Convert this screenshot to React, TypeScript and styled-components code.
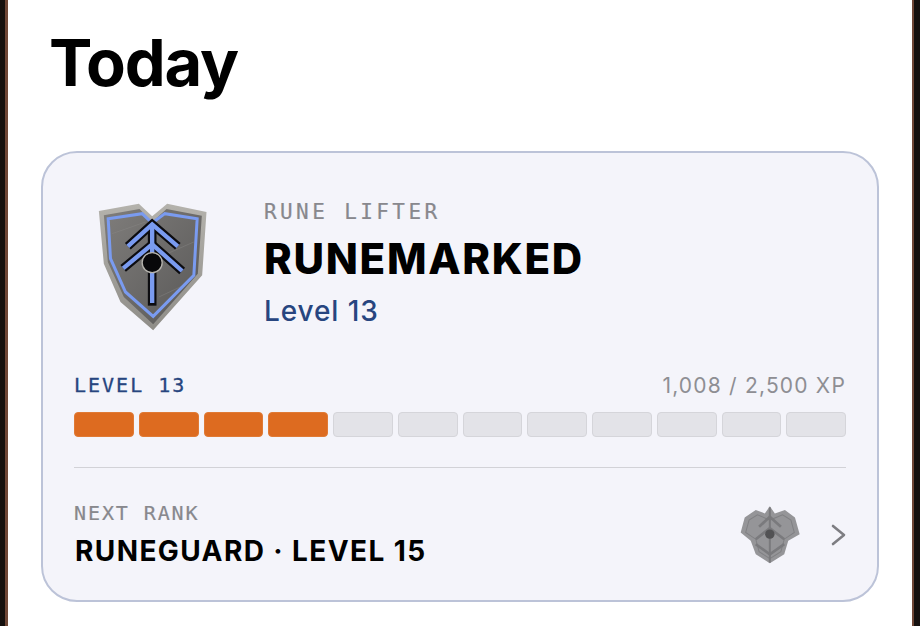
import React from 'react';
import styled, { createGlobalStyle } from 'styled-components';

const GlobalStyle = createGlobalStyle`
  html, body {
    margin: 0;
    padding: 0;
    background: #fff;
    overflow: hidden;
  }
  * {
    box-sizing: border-box;
  }
`;

const Frame = styled.div`
  width: 920px;
  height: 626px;
  overflow: hidden;
  background: #15100e;
  padding: 0 6px 0 5px;
`;

const Screen = styled.div`
  height: 626px;
  background: #fff;
  border-left: 3px solid #6e4636;
  border-right: 2px solid #6e4636;
  padding: 24px 33px 0 33px;
`;

const Title = styled.h1`
  margin: 0 0 0 8px;
  font-family: Inter, "Liberation Sans", sans-serif;
  font-weight: 700;
  font-size: 65px;
  line-height: 77px;
  letter-spacing: -1.2px;
  color: #000;
`;

const Card = styled.section`
  margin-top: 50px;
  height: 451px;
  background: #f4f4fa;
  border: 2px solid #bcc3d8;
  border-radius: 36px;
  padding: 49px 31px 0 31px;
`;

const RankRow = styled.div`
  display: flex;
  align-items: flex-start;
  padding-left: 23px;
  height: 172px;
`;

const RankText = styled.div`
  margin-left: 55px;
  display: flex;
  flex-direction: column;
`;

const Eyebrow = styled.div`
  font-family: "DejaVu Sans Mono", "Liberation Mono", monospace;
  font-size: 21px;
  line-height: 20px;
  letter-spacing: 3.4px;
  color: #88888d;
  -webkit-text-stroke: 0.2px #88888d;
`;

const RankName = styled.div`
  margin-top: 11px;
  font-family: Inter, "Liberation Sans", sans-serif;
  font-weight: 800;
  font-size: 42px;
  line-height: 52px;
  letter-spacing: 1.7px;
  color: #000;
`;

const RankLevel = styled.div`
  margin-top: 9px;
  font-family: Inter, "Liberation Sans", sans-serif;
  font-weight: 500;
  font-size: 28px;
  line-height: 34px;
  letter-spacing: 0.9px;
  color: #27457f;
`;

const ProgressHead = styled.div`
  display: flex;
  align-items: center;
  justify-content: space-between;
  height: 22px;
`;

const LevelLabel = styled.div`
  font-family: "DejaVu Sans Mono", "Liberation Mono", monospace;
  font-size: 20px;
  letter-spacing: 2px;
  color: #27457f;
  -webkit-text-stroke: 0.3px #27457f;
`;

const XpLabel = styled.div`
  font-family: Inter, "Liberation Sans", sans-serif;
  font-size: 21px;
  letter-spacing: 1.2px;
  color: #8e8e93;
`;

const Segments = styled.div`
  margin-top: 16px;
  display: grid;
  grid-template-columns: repeat(12, 1fr);
  gap: 5px;
`;

const Segment = styled.div<{ $on: boolean }>`
  height: 25px;
  border-radius: 4px;
  background: ${(p) => (p.$on ? '#dd6b20' : '#e3e3e8')};
  border: 1px solid ${(p) => (p.$on ? '#e07a35' : '#d5d5da')};
`;

const Divider = styled.div`
  margin-top: 30px;
  height: 1px;
  background: #d2d2d7;
`;

const NextRow = styled.div`
  display: flex;
  align-items: center;
  margin-top: 33px;
`;

const NextText = styled.div`
  flex: 1;
`;

const NextEyebrow = styled.div`
  font-family: "DejaVu Sans Mono", "Liberation Mono", monospace;
  font-size: 20px;
  line-height: 24px;
  letter-spacing: 1.9px;
  color: #88888d;
  -webkit-text-stroke: 0.2px #88888d;
`;

const NextName = styled.div`
  margin-top: 9px;
  padding-left: 1px;
  font-family: Inter, "Liberation Sans", sans-serif;
  font-weight: 700;
  font-size: 28px;
  line-height: 34px;
  letter-spacing: 1.4px;
  color: #000;
`;

const Chevron = styled.svg`
  margin-left: 30px;
  margin-right: -1px;
  width: 16px;
  height: 24px;
`;

const Shield = () => (
  <svg width="112" height="130" viewBox="80 65 335 390">
    <defs>
      <linearGradient id="metal" x1="0" y1="0" x2="1" y2="1">
        <stop offset="0" stopColor="#7f7d7b" />
        <stop offset="1" stopColor="#595857" />
      </linearGradient>
      <linearGradient id="rim" x1="0" y1="0" x2="0" y2="1">
        <stop offset="0" stopColor="#b4b2ac" />
        <stop offset="1" stopColor="#8f8d88" />
      </linearGradient>
    </defs>
    <path d="M85 92 L205 70 L245 108 L290 70 L408 95 L395 285 L248 450 L150 365 L100 250 Z" fill="url(#rim)" />
    <path d="M100 105 L207 86 L245 125 L288 86 L394 106 L382 280 L248 432 L160 350 L112 245 Z" fill="url(#metal)" />
    <g stroke="#8c8b89" strokeWidth="2" opacity="0.6">
      <path d="M125 160 L225 125" />
      <path d="M290 220 L370 185" />
      <path d="M265 350 L350 310" />
    </g>
    <path d="M113 115 L215 100 L245 128 L283 100 L380 115 L370 285 L248 408 L165 335 L120 235 Z" fill="none" stroke="#7a9bf0" strokeWidth="9" />
    <g fill="none">
      <g stroke="#0c0c10" strokeWidth="26">
        <path d="M172 198 L245 132 L322 198" />
        <path d="M158 264 L245 192 L335 272" />
        <path d="M245 132 L245 376" />
      </g>
      <g stroke="#7a9bf0" strokeWidth="13">
        <path d="M172 198 L245 132 L322 198" />
        <path d="M158 264 L245 192 L335 272" />
        <path d="M245 132 L245 368" />
      </g>
    </g>
    <circle cx="245" cy="247" r="30" fill="#08080a" stroke="#b5b3ad" strokeWidth="4" />
  </svg>
);

const SmallShield = () => (
  <svg width="62" height="60" viewBox="115 45 185 175">
    <path d="M120 125 L132 80 L165 58 L192 68 L207 47 L222 68 L252 58 L282 80 L296 130 L262 150 L250 190 L207 217 L165 190 L150 150 Z" fill="#959598" />
    <path d="M135 125 L145 88 L170 72 L207 88 L245 72 L270 88 L280 125 L250 145 L240 182 L207 203 L175 182 L165 145 Z" fill="none" stroke="#808083" strokeWidth="3" />
    <g fill="none" stroke="#7a7a7d" strokeWidth="8">
      <path d="M175 108 L207 78 L240 108" />
      <path d="M165 145 L207 112 L250 145" />
      <path d="M165 160 L207 190 L250 160" />
      <path d="M207 50 L207 215" strokeWidth="6" />
    </g>
    <circle cx="207" cy="130" r="14" fill="#525254" />
  </svg>
);

const segments = Array.from({ length: 12 }, (_, i) => i < 4);

const App: React.FC = () => {
  return (
    <>
      <GlobalStyle />
      <Frame>
        <Screen>
          <Title>Today</Title>
          <Card>
            <RankRow>
              <Shield />
              <RankText>
                <Eyebrow>RUNE LIFTER</Eyebrow>
                <RankName>RUNEMARKED</RankName>
                <RankLevel>Level 13</RankLevel>
              </RankText>
            </RankRow>
            <ProgressHead>
              <LevelLabel>LEVEL 13</LevelLabel>
              <XpLabel>1,008 / 2,500 XP</XpLabel>
            </ProgressHead>
            <Segments>
              {segments.map((on, i) => (
                <Segment key={i} $on={on} />
              ))}
            </Segments>
            <Divider />
            <NextRow>
              <NextText>
                <NextEyebrow>NEXT RANK</NextEyebrow>
                <NextName>RUNEGUARD · LEVEL 15</NextName>
              </NextText>
              <SmallShield />
              <Chevron viewBox="0 0 16 24">
                <path d="M2 3 L13 12 L2 21" fill="none" stroke="#7d7d82" strokeWidth="2.6" strokeLinecap="round" strokeLinejoin="round" />
              </Chevron>
            </NextRow>
          </Card>
        </Screen>
      </Frame>
    </>
  );
};

export default App;
